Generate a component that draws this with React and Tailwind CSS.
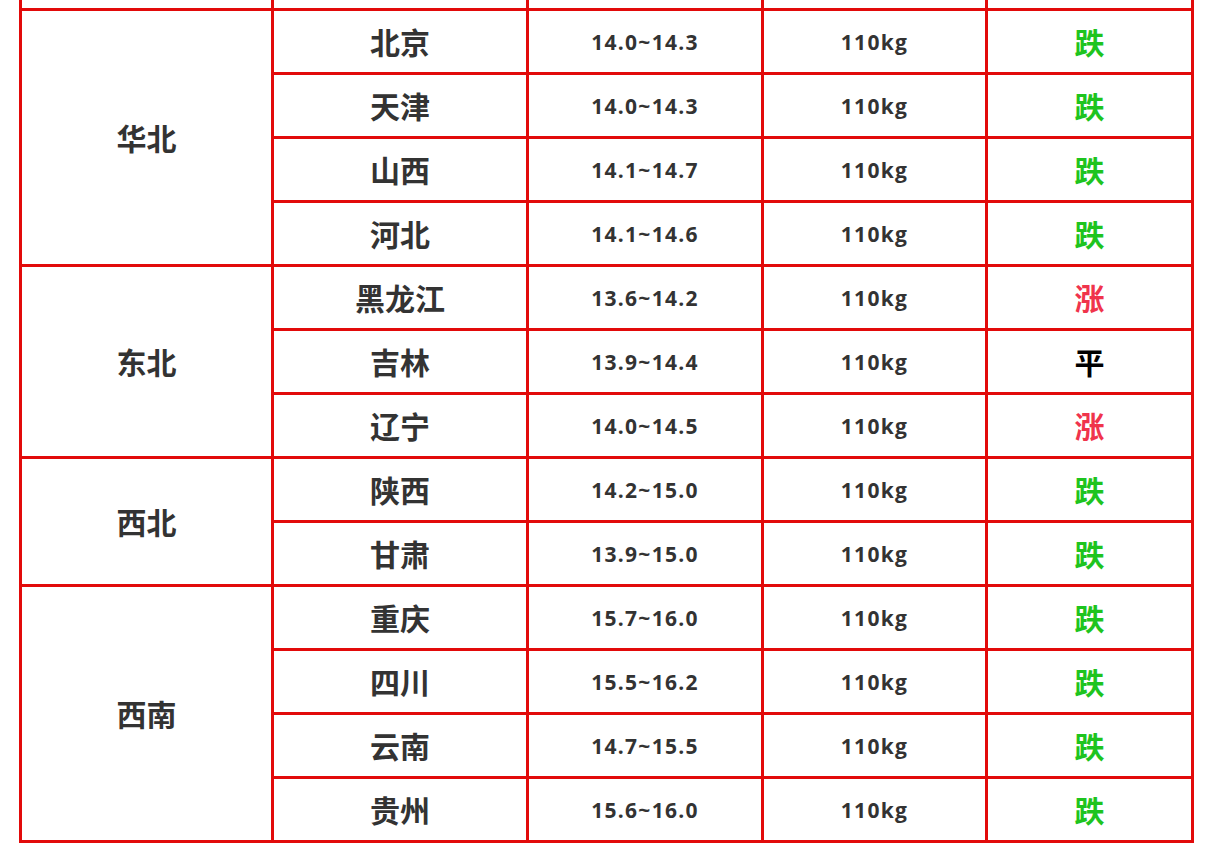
import React from 'react';

const REGIONS = [
  {
    name: '华北',
    rows: [
      ['北京', '14.0~14.3', '跌'],
      ['天津', '14.0~14.3', '跌'],
      ['山西', '14.1~14.7', '跌'],
      ['河北', '14.1~14.6', '跌'],
    ],
  },
  {
    name: '东北',
    rows: [
      ['黑龙江', '13.6~14.2', '涨'],
      ['吉林', '13.9~14.4', '平'],
      ['辽宁', '14.0~14.5', '涨'],
    ],
  },
  {
    name: '西北',
    rows: [
      ['陕西', '14.2~15.0', '跌'],
      ['甘肃', '13.9~15.0', '跌'],
    ],
  },
  {
    name: '西南',
    rows: [
      ['重庆', '15.7~16.0', '跌'],
      ['四川', '15.5~16.2', '跌'],
      ['云南', '14.7~15.5', '跌'],
      ['贵州', '15.6~16.0', '跌'],
    ],
  },
];

const TREND_COLOR = {
  跌: 'text-[#1ec41e]',
  涨: 'text-[#f0344c]',
  平: 'text-black',
};

const SPAN = { 2: 'row-span-2', 3: 'row-span-3', 4: 'row-span-4' };

const cjk = "font-['Noto_Sans_CJK_SC',sans-serif] font-bold text-[30px]";
const num = "font-['Open_Sans','Noto_Sans_CJK_SC',sans-serif] font-bold text-[21px] tracking-[1.3px] pt-[2px]";

export default function App() {
  return (
    <div className="bg-white w-[1215px] h-[849px] overflow-hidden">
      <div className="ml-[19px] w-[1175px] bg-[#e20a0a] px-[3px] pb-[3px] grid grid-cols-[249px_252px_232px_221px_203px] grid-rows-[8px_repeat(13,61px)] gap-[3px]">
        {[0, 1, 2, 3, 4].map((i) => (
          <div key={i} className="bg-white" />
        ))}
        {REGIONS.map((region) => (
          <React.Fragment key={region.name}>
            <div
              className={`${SPAN[region.rows.length]} bg-white flex items-center justify-center text-[#333] ${cjk}`}
            >
              {region.name}
            </div>
            {region.rows.map(([city, price, trend]) => (
              <React.Fragment key={city}>
                <div className={`bg-white flex items-center justify-center text-[#333] ${cjk}`}>{city}</div>
                <div className={`bg-white flex items-center justify-center text-[#333] ${num}`}>{price}</div>
                <div className={`bg-white flex items-center justify-center text-[#333] ${num}`}>110kg</div>
                <div className={`bg-white flex items-center justify-center ${cjk} ${TREND_COLOR[trend]}`}>
                  {trend}
                </div>
              </React.Fragment>
            ))}
          </React.Fragment>
        ))}
      </div>
    </div>
  );
}
